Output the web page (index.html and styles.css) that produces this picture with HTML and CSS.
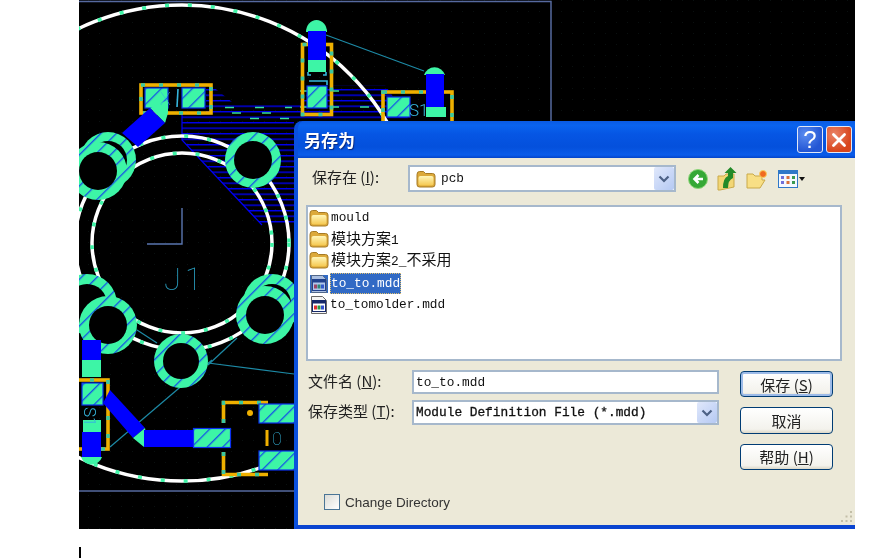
FILE: index.html
```html
<!DOCTYPE html>
<html lang="zh">
<head>
<meta charset="utf-8">
<title>另存为</title>
<link rel="stylesheet" href="styles.css">
</head>
<body>
<svg class="defs" width="0" height="0" aria-hidden="true">
  <defs>
    <pattern id="hatch" patternUnits="userSpaceOnUse" width="11" height="11" patternTransform="rotate(45)">
      <rect width="11" height="11" fill="#3df5a6"/>
      <rect width="1.3" height="11" fill="#1450e8"/>
    </pattern>
    <pattern id="pour" patternUnits="userSpaceOnUse" width="8" height="5.5" y="1">
      <rect width="8" height="1.4" fill="#0000f0"/>
    </pattern>
    <pattern id="grid" patternUnits="userSpaceOnUse" width="11" height="11">
      <rect width="1" height="1" fill="#0a1010"/>
    </pattern>
    <linearGradient id="fg" x1="0" y1="0" x2="0" y2="1">
      <stop offset="0" stop-color="#fff6b8"/>
      <stop offset="1" stop-color="#f5c850"/>
    </linearGradient>
    <symbol id="folder" viewBox="0 0 20 18">
      <path d="M1 4.500Q1 1.500 3.500 1.500H7.500L9.500 3.500H16.500Q19 3.500 19 6V14.500Q19 17 16.500 17H3.500Q1 17 1 14.500Z" fill="#dca93a" stroke="#a67a24" stroke-width="1"/>
      <path d="M2.500 8Q2.500 6 4.500 6H15.500Q17.500 6 17.500 8V13.500Q17.500 15.500 15.500 15.500H4.500Q2.500 15.500 2.500 13.500Z" fill="url(#fg)"/>
    </symbol>
    <symbol id="mdd" viewBox="0 0 18 18">
      <path d="M1.500 .5H12.500L16.500 4.500V17.500H1.500Z" fill="#f4f4f4" stroke="#666"/>
      <rect x="2.500" y="4.500" width="13" height="11" fill="#fff" stroke="#16296a"/>
      <rect x="2.500" y="4.500" width="13" height="3" fill="#16296a"/>
      <rect x="4" y="9.500" width="3" height="4" fill="#e03030"/>
      <rect x="7.500" y="9.500" width="3" height="4" fill="#2a9a40"/>
      <rect x="11" y="9.500" width="3" height="4" fill="#3050d0"/>
    </symbol>
  </defs>
</svg>

<main class="shot">
  <svg class="pcb" viewBox="79 0 776 529" aria-hidden="false">
    <rect x="79" y="0" width="776" height="529" fill="#000"/>
    <rect x="79" y="0" width="776" height="529" fill="url(#grid)"/>
    <path d="M79 1.500H551V121M79 491H294" class="outline"/>

    <path d="M182 113V140L262 225H294V102H302L312 85H385L410 121H294V102H232L212 86H206V113Z" fill="url(#pour)"/>
    <path d="M182 113V140L262 225" class="poured"/>
    <path d="M225 107.500H292M232 113H290M250 118.500H294M300 91H345M300 107H395" class="pour-dash"/>

    <line x1="326" y1="35" x2="424" y2="71" class="rat"/>
    <line x1="212" y1="360" x2="110" y2="447" class="rat"/>
    <line x1="137" y1="330" x2="157" y2="343" class="rat"/>
    <line x1="208" y1="365" x2="237" y2="338" class="rat"/>
    <line x1="208" y1="363" x2="294" y2="374" class="rat"/>

    <circle cx="182" cy="243" r="238" class="arc"/>
    <circle cx="182" cy="243" r="238" class="arc-dash"/>
    <circle cx="182" cy="243" r="107" class="arc"/>
    <circle cx="182" cy="243" r="107" class="arc-dash"/>
    <circle cx="182" cy="243" r="90" class="arc"/>
    <circle cx="182" cy="243" r="90" class="arc-dash"/>

    <circle cx="108" cy="160" r="28" class="pad"/><circle cx="108" cy="160" r="19" class="hole"/>
    <circle cx="98" cy="171" r="29" class="pad"/><circle cx="98" cy="171" r="19" class="hole"/>
    <circle cx="253" cy="160" r="28" class="pad"/><circle cx="253" cy="160" r="19" class="hole"/>
    <circle cx="87" cy="304" r="30" class="pad"/><circle cx="87" cy="304" r="20" class="hole"/>
    <circle cx="108" cy="325" r="29" class="pad"/><circle cx="108" cy="325" r="19" class="hole"/>
    <circle cx="272" cy="303" r="29" class="pad"/><circle cx="272" cy="303" r="19" class="hole"/>
    <circle cx="265" cy="315" r="29" class="pad"/><circle cx="265" cy="315" r="19" class="hole"/>
    <circle cx="181" cy="361" r="27" class="pad"/><circle cx="181" cy="361" r="18" class="hole"/>

    <!-- top-left part -->
    <rect x="141" y="85" width="70" height="28" class="part"/>
    <rect x="141" y="85" width="70" height="28" class="part-dash"/>
    <rect x="145" y="88" width="23" height="20" class="smd"/>
    <rect x="182" y="88" width="23" height="20" class="smd"/>
    <path d="M150 108L168 100 168 113 165 123Z" fill="#3df5a6"/>
    <path d="M150 108L165 123 138 147 122 133Z" fill="#00f"/>
    <text x="160" y="105" class="silk silk-sm">X</text>
    <line x1="178" y1="89" x2="177" y2="107" class="silk-line"/>

    <!-- top-middle part -->
    <rect x="302.500" y="44.500" width="29" height="70" class="part"/>
    <rect x="302.500" y="44.500" width="29" height="70" class="part-dash"/>
    <path d="M306 32A10.500 12 0 0 1 327 32Z" fill="#3df5a6"/>
    <rect x="308" y="31" width="18" height="29" fill="#00f"/>
    <rect x="308" y="60" width="18" height="12" fill="#3df5a6"/>
    <path d="M308 72V75H311M326 72V75H323M309 81H327V85" class="silk-line"/>
    <rect x="307" y="86" width="20" height="22" class="smd"/>

    <!-- top-right part -->
    <rect x="383" y="92" width="69" height="40" class="part"/>
    <rect x="383" y="92" width="69" height="40" class="part-dash"/>
    <path d="M424 75A11 11 0 0 1 445 75Z" fill="#3df5a6"/>
    <rect x="426" y="74" width="18" height="34" fill="#00f"/>
    <rect x="426" y="107" width="20" height="10" fill="#3df5a6"/>
    <rect x="387" y="97" width="23" height="20" class="smd"/>
    <text x="409" y="116" class="silk silk-top">S1</text>

    <!-- bottom-left part -->
    <rect x="82" y="340" width="19" height="20" fill="#00f"/>
    <rect x="82" y="360" width="19" height="17" fill="#3df5a6"/>
    <rect x="72" y="380" width="36" height="69" class="part"/>
    <rect x="72" y="380" width="36" height="69" class="part-dash"/>
    <rect x="82" y="383" width="21" height="22" class="smd"/>
    <rect x="83" y="420" width="18" height="12" fill="#3df5a6"/>
    <text x="0" y="0" class="silk silk-top" transform="translate(84 407) rotate(90)">S1</text>
    <path d="M110 390L145 428 133 438 103 403Z" fill="#00f"/>
    <path d="M145 428L148 447H144L133 438Z" fill="#3df5a6"/>
    <rect x="144" y="430" width="50" height="17" fill="#00f"/>
    <rect x="193.500" y="428.500" width="37" height="19" class="smd"/>
    <rect x="82" y="432" width="19" height="26" fill="#00f"/>
    <path d="M81 457A11 11 0 0 0 102 457Z" fill="#3df5a6"/>

    <!-- bottom-right part -->
    <path d="M223.500 423V402.500H268M223.500 452V474.500H268" class="part"/>
    <path d="M223.500 423V402.500H268M223.500 452V474.500H268" class="part-dash"/>
    <circle cx="250" cy="413" r="3" fill="#f0b000"/>
    <rect x="259" y="404" width="36" height="19" class="smd"/>
    <rect x="259" y="451" width="36" height="19" class="smd"/>
    <rect x="265.500" y="430" width="3" height="16" fill="#f0b000"/>
    <text x="272" y="445" class="silk silk-sm">0</text>

    <text x="164" y="290" class="silk silk-lg">J1</text>
    <path d="M182 208V244H147" class="ref-mark"/>
  </svg>

  <section class="dialog">
    <header class="titlebar">
      <h1 class="title">另存为</h1>
      <div class="caption-buttons">
        <button class="cap cap-help" type="button">?</button>
        <button class="cap cap-close" type="button">
          <svg viewBox="0 0 26 26" width="26" height="26"><path d="M7 7L19 19M19 7L7 19" stroke="#fff" stroke-width="3" stroke-linecap="round"/></svg>
        </button>
      </div>
    </header>

    <div class="client">
      <div class="lookin">
        <label class="label lookin-label">保存在 (<u>I</u>):</label>
        <div class="combo combo-top">
          <svg class="combo-folder" width="22" height="18"><use href="#folder"/></svg>
          <span class="mono">pcb</span>
          <span class="drop"><svg width="12" height="8" viewBox="0 0 12 8"><path d="M1.500 1.500L6 6 10.500 1.500" fill="none" stroke="#4d6185" stroke-width="2.200"/></svg></span>
        </div>
        <div class="tools">
          <svg width="22" height="22" viewBox="0 0 22 22"><circle cx="11" cy="11" r="9.500" fill="#35a835" stroke="#8fd67a"/><path d="M16 11H8M11.500 7L7.500 11 11.500 15" fill="none" stroke="#fff" stroke-width="2.600"/></svg>
          <svg width="22" height="24" viewBox="0 0 22 24"><path d="M2 9H8L10 7H18V20L4 23H2Z" fill="#f2d675" stroke="#c9a94a"/><path d="M7 21Q7 11 12 9V6H8.500L14.500 0 20.500 6H17V11Q12 13 12 21Z" fill="#238a28"/></svg>
          <svg width="24" height="22" viewBox="0 0 24 22"><path d="M2 6H8L10 8H17V12L20 12 15 20H2Z" fill="#f8df85" stroke="#c9a94a"/><circle cx="18" cy="6" r="3.500" fill="#f06a20" stroke="#fbd060"/></svg>
          <span class="views">
            <svg width="20" height="18" viewBox="0 0 20 18"><rect x=".5" y=".5" width="19" height="17" fill="#f4f8ff" stroke="#2f78c8"/><rect x="1" y="1" width="18" height="3" fill="#2f78c8"/><path d="M3 6h3v3H3zM3 11h3v3H3z" fill="#7070d8"/><path d="M8.500 6h3v3h-3zM8.500 11h3v3h-3z" fill="#d8703c"/><path d="M14 6h3v3h-3zM14 11h3v3h-3z" fill="#3a9a50"/></svg>
            <i class="caret-down"></i>
          </span>
        </div>
      </div>

      <ul class="files">
        <li class="file"><svg width="20" height="18"><use href="#folder"/></svg><span class="name">mould</span></li>
        <li class="file"><svg width="20" height="18"><use href="#folder"/></svg><span class="name"><span class="cjk">模块方案</span>1</span></li>
        <li class="file"><svg width="20" height="18"><use href="#folder"/></svg><span class="name"><span class="cjk">模块方案</span>2_<span class="cjk">不采用</span></span></li>
        <li class="file file-doc"><svg class="sel-icon" width="18" height="18"><use href="#mdd"/></svg><span class="name selected">to_to.mdd</span></li>
        <li class="file file-doc"><svg width="18" height="18"><use href="#mdd"/></svg><span class="name">to_tomolder.mdd</span></li>
      </ul>

      <div class="lower">
        <div class="fields">
          <label class="label field-label">文件名 (<u>N</u>):</label>
          <div class="combo field"><span class="mono">to_to.mdd</span></div>
          <label class="label field-label">保存类型 (<u>T</u>):</label>
          <div class="combo field field-type">
            <span class="mono mono-strong">Module Definition File (*.mdd)</span>
            <span class="drop"><svg width="12" height="8" viewBox="0 0 12 8"><path d="M1.500 1.500L6 6 10.500 1.500" fill="none" stroke="#4d6185" stroke-width="2.200"/></svg></span>
          </div>
        </div>
        <div class="actions">
          <button class="btn btn-default" type="button">保存 (<u>S</u>)</button>
          <button class="btn" type="button">取消</button>
          <button class="btn" type="button">帮助 (<u>H</u>)</button>
        </div>
      </div>

      <label class="check"><span class="box"></span>Change Directory</label>

      <svg class="grip" width="14" height="14" viewBox="0 0 14 14"><path d="M11 2h2v2h-2zM6.500 6.500h2v2h-2zM11 6.500h2v2h-2zM2 11h2v2H2zM6.500 11h2v2h-2zM11 11h2v2h-2z" fill="#c3bfa8"/></svg>
    </div>
  </section>
</main>
<div class="text-caret"></div>
</body>
</html>
```
FILE: styles.css
```css
* { box-sizing: border-box; }
html, body { margin: 0; padding: 0; background: #fff; }
body { width: 894px; height: 558px; overflow: hidden; font-family: "Noto Sans CJK SC", "Liberation Sans", sans-serif; }
.defs { position: absolute; }

.shot { position: relative; width: 776px; height: 529px; margin-left: 79px; background: #000; overflow: hidden; }
.pcb { display: block; width: 776px; height: 529px; filter: blur(.35px); }

.outline { fill: none; stroke: #56699f; stroke-width: 1.500; }
.poured { fill: none; stroke: #0000f0; stroke-width: 1.200; }
.pour-dash { fill: none; stroke: #35e09a; stroke-width: 1.400; stroke-dasharray: 9 21; }
.rat { stroke: #1d8aa6; stroke-width: 1.200; }
.arc { fill: none; stroke: #fff; stroke-width: 3.500; }
.arc-dash { fill: none; stroke: #3df5a6; stroke-width: 3.500; stroke-dasharray: 4 19; }
.pad { fill: url(#hatch); }
.hole { fill: #000; }
.part { fill: none; stroke: #eeb000; stroke-width: 3.600; }
.part-dash { fill: none; stroke: #3cc8a0; stroke-width: 3.600; stroke-dasharray: 4 14; }
.smd { fill: url(#hatch); stroke: #0a30f0; stroke-width: 1.200; }
.silk { fill: #36b6dc; font-family: "Roboto", "Liberation Sans", sans-serif; font-weight: 100; }
.silk-sm { font-size: 18px; }
.silk-top { font-size: 17px; font-weight: 300; }
.silk-lg { font-size: 31px; letter-spacing: 4px; fill: #2aa2c4; }
.silk-line { fill: none; stroke: #36b6dc; stroke-width: 1.600; }
.ref-mark { fill: none; stroke: #5a76b0; stroke-width: 1.400; }

.dialog { position: absolute; right: 0; bottom: 0; width: 561px; height: 408px; display: flex; flex-direction: column; border-left: 4px solid #0a50dc; border-bottom: 4px solid #0a44d0; border-radius: 8px 0 0 0; background: #0a50dc; filter: blur(.3px); }
.titlebar { height: 37px; flex: none; display: flex; align-items: center; justify-content: space-between; padding: 0 3px 0 6px; border-radius: 7px 0 0 0; background: linear-gradient(#0a5ae2 0, #0a63ee 12%, #0656e4 35%, #0450dc 70%, #0a5cea 92%, #0444c8 100%); }
.title { margin: 0; font-size: 17px; font-weight: 700; line-height: 20px; color: #fff; text-shadow: 1px 1px 1px #0a2a80; }
.caption-buttons { display: flex; gap: 3px; }
.cap { width: 26px; height: 27px; padding: 0; display: flex; align-items: center; justify-content: center; border: 1px solid #e2e8f6; border-radius: 3px; color: #fff; font: 400 24px/25px "Liberation Sans", sans-serif; }
.cap-help { background: radial-gradient(circle at 30% 30%, #5a8cf0, #2356d4 70%); }
.cap-close { background: radial-gradient(circle at 30% 30%, #ea8468, #d8451c 70%); }

.client { position: relative; flex: 1; padding: 7px 0 0 8px; background: #ece9d8; }
.label { font-size: 15px; line-height: 21px; color: #222; white-space: nowrap; }
.lookin { display: flex; align-items: center; height: 27px; }
.lookin-label { width: 102px; padding: 0 0 4px 6px; }
.field-label { padding-left: 2px; }
.combo { display: flex; align-items: center; background: #fff; border: 2px solid #a6b8cc; }
.combo-top { width: 268px; height: 27px; padding-left: 5px; }
.combo-folder { margin-right: 4px; }
.mono { font-family: "Liberation Mono", monospace; font-size: 12.800px; color: #111; white-space: pre; }
.mono-strong { -webkit-text-stroke: .3px #111; }
.drop { margin-left: auto; width: 20px; height: 100%; display: flex; align-items: center; justify-content: center; background: linear-gradient(135deg, #e0e8fb, #b5c9f3); border-radius: 2px; }
.tools { display: flex; align-items: center; gap: 7px; margin-left: 11px; }
.views { display: flex; align-items: center; gap: 1px; margin-left: 2px; }
.caret-down { width: 0; height: 0; border: 3.500px solid transparent; border-top: 4px solid #111; border-bottom: 0; }

.files { list-style: none; width: 536px; height: 156px; margin: 13px 0 0; padding: 0 0 0 1px; background: #fff; border: 2px solid #a6b8cc; }
.file { display: flex; align-items: center; height: 21px; gap: 2px; }
.file-doc { padding-left: 1px; gap: 2px; }
.file-doc:nth-child(4) { margin-top: 3px; }
.name { font-family: "Liberation Mono", monospace; font-size: 12.800px; line-height: 21px; color: #111; white-space: pre; }
.cjk { font-family: "Noto Sans CJK SC", sans-serif; font-size: 15px; }
.selected { padding: 0 1px; background: #316ac5; color: #fff; outline: 1px dotted #e0c070; outline-offset: -1px; }
.sel-icon { background: #316ac5; }
.sel-icon use { opacity: .62; }

.lower { display: flex; gap: 21px; margin-top: 9px; height: 100px; }
.fields { width: 413px; display: grid; grid-template-columns: 106px 307px; grid-template-rows: 24px 25px; row-gap: 6px; align-content: start; }
.field { padding-left: 2px; }
.actions { display: flex; flex-direction: column; gap: 10px; width: 93px; padding-top: 1px; }
.btn { height: 27px; padding: 0; border: 1px solid #003c74; border-radius: 4px; background: linear-gradient(#fff, #f3f2ec 85%, #dcd8c8); font-family: "Noto Sans CJK SC", sans-serif; font-size: 15px; line-height: 23px; color: #222; }
.btn-default { box-shadow: inset 0 0 0 2px #9dbbe8; }

.check { display: flex; align-items: center; gap: 5px; margin: 24px 0 0 18px; height: 16px; font-family: "Liberation Sans", sans-serif; font-size: 13.500px; color: #333; }
.box { width: 16px; height: 16px; border: 1px solid #4a7596; background: linear-gradient(135deg, #dcdcd6, #fff); }
.grip { position: absolute; right: 2px; bottom: 2px; }

.text-caret { width: 2px; height: 11px; margin: 18px 0 0 79px; background: #000; }
```
